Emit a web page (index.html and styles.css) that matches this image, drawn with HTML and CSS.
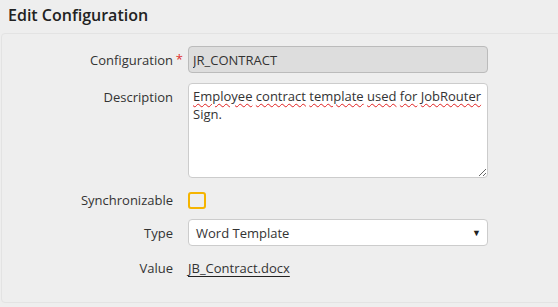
FILE: index.html
```html
<html>
	<head>
		<link rel="stylesheet" href="styles.css">
	</head>
	<body>
		<h1 class="title">Edit Configuration</h1>
		<div class="panel">
			<form class="form">
				<label class="label">Configuration<span class="star">*</span></label>
				<input class="input readonly" value="JR_CONTRACT" readonly>

				<label class="label label-top">Description</label>
				<div class="textarea" contenteditable="true"><span class="typo">Employee</span> <span class="typo">contract</span> <span class="typo">template</span> <span class="typo">used</span> <span class="typo">for</span> <span class="typo">JobRouter</span> Sign.</div>

				<label class="label label-end">Synchronizable</label>
				<span class="checkbox"></span>

				<label class="label">Type</label>
				<div class="select">Word Template<span class="caret">&#9660;</span></div>

				<label class="label label-value">Value</label>
				<div class="value"><a class="link" href="#">JB_Contract.docx</a></div>
			</form>
		</div>
	</body>
</html>
```

FILE: styles.css
```css
body {
	margin: 0;
	background-color: #eeeeee;
	font-family: "Open Sans", "Noto Sans", sans-serif;
	font-size: 13px;
	color: #333333;
	overflow: hidden;
}

.title {
	margin: 0;
	padding: 4px 8px 0 8px;
	height: 29px;
	font-size: 16px;
	font-weight: 600;
	color: #222222;
}

.panel {
	margin-left: 1px;
	margin-right: -10px;
	height: 270px;
	border: 1px solid #e3e3e3;
	border-radius: 4px;
	box-sizing: border-box;
}

.form {
	display: grid;
	grid-template-columns: 171px 300px;
	grid-template-rows: 27px 95px 21px 27px 24px;
	column-gap: 15px;
	row-gap: 10px;
	align-items: center;
	padding-top: 12px;
}

.label {
	text-align: right;
	position: relative;
	line-height: 18px;
}

.label-top {
	align-self: start;
	padding-top: 5px;
}

.label-end {
	align-self: end;
}

.label-value {
	align-self: start;
	padding-top: 3px;
}

.star {
	position: absolute;
	right: -10px;
	top: -1px;
	color: #e03030;
}

.input, .select, .textarea {
	width: 300px;
	box-sizing: border-box;
	border: 1px solid #cccccc;
	border-radius: 4px;
	font-family: inherit;
	font-size: 13px;
	color: #333333;
	background-color: #ffffff;
}

.input {
	height: 27px;
	padding: 0 4px;
}

.readonly {
	background-color: #dddddd;
	border-color: #bbbbbb;
	outline: none;
}

.textarea {
	height: 95px;
	padding: 3px 4px;
	line-height: 18px;
	resize: vertical;
	overflow: auto;
	outline: none;
	align-self: start;
}

.typo {
	text-decoration: underline wavy #e02020;
	text-decoration-thickness: 1px;
	text-underline-offset: 2px;
}

.checkbox {
	width: 18px;
	height: 17px;
	box-sizing: border-box;
	border: 2px solid #f5b400;
	border-radius: 3px;
	align-self: end;
}

.select {
	height: 27px;
	display: flex;
	align-items: center;
	justify-content: space-between;
	padding: 0 6px 0 7px;
}

.caret {
	font-size: 9px;
	color: #222222;
}

.value {
	align-self: start;
	padding-top: 3px;
	line-height: 18px;
}

.link {
	color: #333333;
	text-decoration: underline;
	text-decoration-color: #222222;
	text-underline-offset: 3px;
}
```
